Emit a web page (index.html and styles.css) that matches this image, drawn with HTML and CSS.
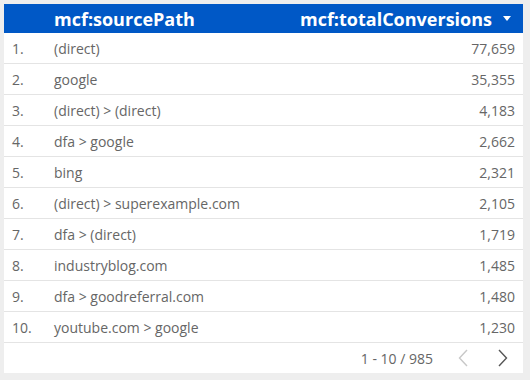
FILE: index.html
```html
<!DOCTYPE html>
<html>
<head>
<meta charset="utf-8">
<link rel="stylesheet" href="styles.css">
</head>
<body>
<div class="card">
  <div class="head">
    <div class="idx"></div>
    <div class="name">mcf:sourcePath</div>
    <div class="val">mcf:totalConversions<svg class="sort" width="8" height="5" viewBox="0 0 8 5"><path d="M0 0H8L4 5Z" fill="#fff"/></svg></div>
  </div>
  <div class="row"><div class="idx">1.</div><div class="name">(direct)</div><div class="val">77,659</div></div>
  <div class="row"><div class="idx">2.</div><div class="name">google</div><div class="val">35,355</div></div>
  <div class="row"><div class="idx">3.</div><div class="name">(direct) &gt; (direct)</div><div class="val">4,183</div></div>
  <div class="row"><div class="idx">4.</div><div class="name">dfa &gt; google</div><div class="val">2,662</div></div>
  <div class="row"><div class="idx">5.</div><div class="name">bing</div><div class="val">2,321</div></div>
  <div class="row"><div class="idx">6.</div><div class="name">(direct) &gt; superexample.com</div><div class="val">2,105</div></div>
  <div class="row"><div class="idx">7.</div><div class="name">dfa &gt; (direct)</div><div class="val">1,719</div></div>
  <div class="row"><div class="idx">8.</div><div class="name">industryblog.com</div><div class="val">1,485</div></div>
  <div class="row"><div class="idx">9.</div><div class="name">dfa &gt; goodreferral.com</div><div class="val">1,480</div></div>
  <div class="row"><div class="idx">10.</div><div class="name">youtube.com &gt; google</div><div class="val">1,230</div></div>
  <div class="foot">
    <span class="range">1 - 10 / 985</span>
    <svg class="chev prev" width="10" height="18" viewBox="0 0 10 18"><path d="M9 1L1.5 9L9 17" fill="none" stroke="#c8c8c8" stroke-width="1.4"/></svg>
    <svg class="chev next" width="10" height="18" viewBox="0 0 10 18"><path d="M1 1L8.5 9L1 17" fill="none" stroke="#555" stroke-width="1.4"/></svg>
  </div>
</div>
</body>
</html>
```
FILE: styles.css
```css
html, body {
  margin: 0;
  padding: 0;
  background: #eeeeee;
}
body {
  padding: 4px;
  font-family: "Open Sans", "Liberation Sans", sans-serif;
}
.card {
  width: 519px;
  height: 369px;
  background: #ffffff;
  display: flex;
  flex-direction: column;
}
.head {
  height: 29px;
  background: #0058c6;
  color: #ffffff;
  font-weight: 700;
  font-size: 18px;
  display: flex;
  align-items: center;
}
.head .val {
  padding-right: 12px;
  display: flex;
  align-items: center;
}
.sort {
  margin-left: 11px;
}
.row {
  height: 30px;
  border-bottom: 1px solid #e4e4e4;
  display: flex;
  align-items: center;
  font-size: 14px;
  color: #666666;
}
.idx {
  width: 42px;
  padding-left: 8px;
}
.name {
  flex: 1;
}
.row .val {
  padding-right: 8px;
}
.foot {
  flex: 1;
  display: flex;
  align-items: center;
  justify-content: flex-end;
  font-size: 14px;
  color: #666666;
  padding-right: 15px;
}
.range {
  margin-right: 25px;
}
.chev.next {
  margin-left: 30px;
}
```
